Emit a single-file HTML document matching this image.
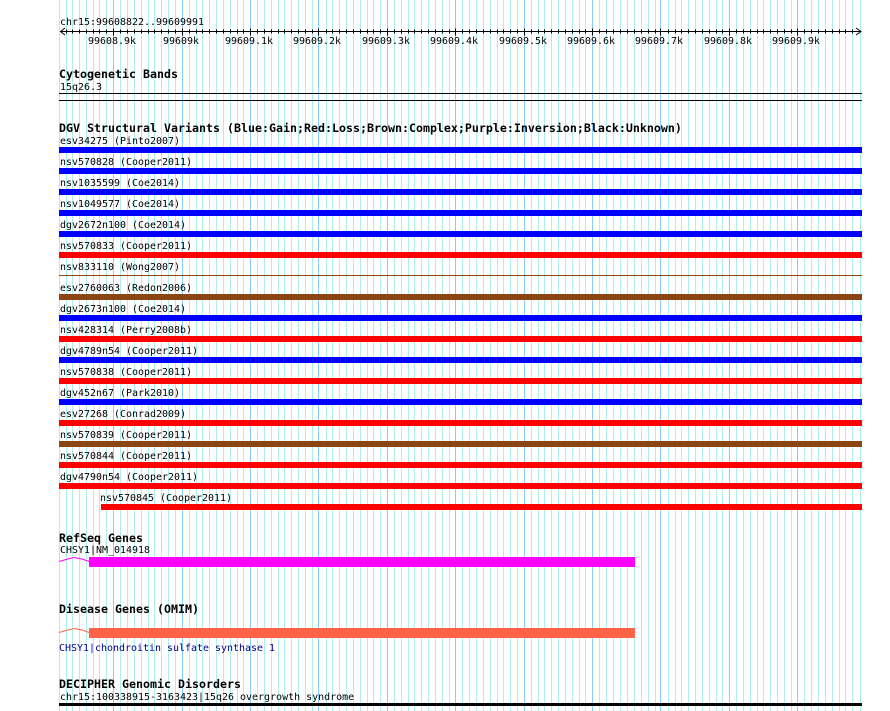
<!DOCTYPE html>
<html><head><meta charset="utf-8"><title>chr15:99608822..99609991</title>
<style>
html,body{margin:0;padding:0;background:#fff;width:890px;height:711px;overflow:hidden}
svg{display:block}
text{font-family:"DejaVu Sans Mono","Liberation Mono",monospace;font-size:9.97px;fill:#000;white-space:pre}
text.b{font-weight:bold;font-size:11.63px}
.bar{shape-rendering:crispEdges}
</style></head><body>
<svg width="890" height="711" viewBox="0 0 890 711" xmlns="http://www.w3.org/2000/svg">
<g shape-rendering="crispEdges" stroke-width="1" fill="none">
<path stroke="#afeeee" transform="translate(.5,0)" d="M59 0V711M66 0V711M72 0V711M79 0V711M86 0V711M93 0V711M99 0V711M106 0V711M120 0V711M127 0V711M134 0V711M141 0V711M148 0V711M154 0V711M161 0V711M168 0V711M175 0V711M189 0V711M196 0V711M202 0V711M209 0V711M216 0V711M223 0V711M230 0V711M237 0V711M243 0V711M257 0V711M264 0V711M271 0V711M278 0V711M284 0V711M291 0V711M298 0V711M305 0V711M312 0V711M326 0V711M332 0V711M339 0V711M346 0V711M353 0V711M360 0V711M367 0V711M373 0V711M380 0V711M394 0V711M401 0V711M408 0V711M414 0V711M421 0V711M428 0V711M435 0V711M442 0V711M449 0V711M462 0V711M469 0V711M476 0V711M483 0V711M490 0V711M497 0V711M503 0V711M510 0V711M517 0V711M531 0V711M538 0V711M544 0V711M551 0V711M558 0V711M565 0V711M572 0V711M579 0V711M585 0V711M599 0V711M606 0V711M613 0V711M620 0V711M627 0V711M634 0V711M641 0V711M648 0V711M655 0V711M668 0V711M675 0V711M681 0V711M688 0V711M695 0V711M702 0V711M709 0V711M716 0V711M722 0V711M736 0V711M743 0V711M750 0V711M757 0V711M763 0V711M770 0V711M777 0V711M784 0V711M791 0V711M804 0V711M811 0V711M818 0V711M825 0V711M832 0V711M839 0V711M845 0V711M852 0V711M860 0V711"/>
<path stroke="#87cefa" transform="translate(.5,0)" d="M113 0V711M182 0V711M250 0V711M318 0V711M387 0V711M455 0V711M524 0V711M592 0V711M660 0V711M729 0V711M797 0V711"/>
<path stroke="#000" transform="translate(.5,.5)" d="M60 31H861M66 29V33M72 29V33M79 29V33M86 29V33M93 29V33M99 29V33M106 29V33M120 29V33M127 29V33M134 29V33M141 29V33M148 29V33M154 29V33M161 29V33M168 29V33M175 29V33M189 29V33M196 29V33M202 29V33M209 29V33M216 29V33M223 29V33M230 29V33M237 29V33M243 29V33M257 29V33M264 29V33M271 29V33M278 29V33M284 29V33M291 29V33M298 29V33M305 29V33M312 29V33M326 29V33M332 29V33M339 29V33M346 29V33M353 29V33M360 29V33M367 29V33M373 29V33M380 29V33M394 29V33M401 29V33M408 29V33M414 29V33M421 29V33M428 29V33M435 29V33M442 29V33M449 29V33M462 29V33M469 29V33M476 29V33M483 29V33M490 29V33M497 29V33M503 29V33M510 29V33M517 29V33M531 29V33M538 29V33M544 29V33M551 29V33M558 29V33M565 29V33M572 29V33M579 29V33M585 29V33M599 29V33M606 29V33M613 29V33M620 29V33M627 29V33M634 29V33M641 29V33M648 29V33M655 29V33M668 29V33M675 29V33M681 29V33M688 29V33M695 29V33M702 29V33M709 29V33M716 29V33M722 29V33M736 29V33M743 29V33M750 29V33M757 29V33M763 29V33M770 29V33M777 29V33M784 29V33M791 29V33M804 29V33M811 29V33M818 29V33M825 29V33M832 29V33M839 29V33M845 29V33M852 29V33M113 28V35M182 28V35M250 28V35M318 28V35M387 28V35M455 28V35M524 28V35M592 28V35M660 28V35M729 28V35M797 28V35"/>
</g>
<path d="M65 28L60.5 31.5L65 35M856 28L861 31.5L856 35" fill="none" stroke="#000" stroke-width="1"/>
<text x="60" y="25">chr15:99608822..99609991</text>
<text x="88" y="44">99608.9k</text>
<text x="163" y="44">99609k</text>
<text x="225" y="44">99609.1k</text>
<text x="293" y="44">99609.2k</text>
<text x="362" y="44">99609.3k</text>
<text x="430" y="44">99609.4k</text>
<text x="499" y="44">99609.5k</text>
<text x="567" y="44">99609.6k</text>
<text x="635" y="44">99609.7k</text>
<text x="704" y="44">99609.8k</text>
<text x="772" y="44">99609.9k</text>

<text class="b" x="59" y="78">Cytogenetic Bands</text>
<text x="60" y="90">15q26.3</text>
<g class="bar">
<rect x="59" y="93" width="803" height="1" fill="#000"/>
<rect x="59" y="100" width="803" height="1" fill="#000"/>
</g>

<text class="b" x="59" y="132">DGV Structural Variants (Blue:Gain;Red:Loss;Brown:Complex;Purple:Inversion;Black:Unknown)</text>

<text x="60" y="144">esv34275 (Pinto2007)</text>
<text x="60" y="165">nsv570828 (Cooper2011)</text>
<text x="60" y="186">nsv1035599 (Coe2014)</text>
<text x="60" y="207">nsv1049577 (Coe2014)</text>
<text x="60" y="228">dgv2672n100 (Coe2014)</text>
<text x="60" y="249">nsv570833 (Cooper2011)</text>
<text x="60" y="270">nsv833110 (Wong2007)</text>
<text x="60" y="291">esv2760063 (Redon2006)</text>
<text x="60" y="312">dgv2673n100 (Coe2014)</text>
<text x="60" y="333">nsv428314 (Perry2008b)</text>
<text x="60" y="354">dgv4789n54 (Cooper2011)</text>
<text x="60" y="375">nsv570838 (Cooper2011)</text>
<text x="60" y="396">dgv452n67 (Park2010)</text>
<text x="60" y="417">esv27268 (Conrad2009)</text>
<text x="60" y="438">nsv570839 (Cooper2011)</text>
<text x="60" y="459">nsv570844 (Cooper2011)</text>
<text x="60" y="480">dgv4790n54 (Cooper2011)</text>
<text x="100" y="501">nsv570845 (Cooper2011)</text>

<g class="bar">
<rect x="59" y="147" width="803" height="6" fill="#0000ff"/>
<rect x="59" y="168" width="803" height="6" fill="#0000ff"/>
<rect x="59" y="189" width="803" height="6" fill="#0000ff"/>
<rect x="59" y="210" width="803" height="6" fill="#0000ff"/>
<rect x="59" y="231" width="803" height="6" fill="#0000ff"/>
<rect x="59" y="252" width="803" height="6" fill="#ff0000"/>
<rect x="59" y="275" width="803" height="1" fill="#8b4513"/>
<rect x="59" y="294" width="803" height="6" fill="#8b4513"/>
<rect x="59" y="315" width="803" height="6" fill="#0000ff"/>
<rect x="59" y="336" width="803" height="6" fill="#ff0000"/>
<rect x="59" y="357" width="803" height="6" fill="#0000ff"/>
<rect x="59" y="378" width="803" height="6" fill="#ff0000"/>
<rect x="59" y="399" width="803" height="6" fill="#0000ff"/>
<rect x="59" y="420" width="803" height="6" fill="#ff0000"/>
<rect x="59" y="441" width="803" height="6" fill="#8b4513"/>
<rect x="59" y="462" width="803" height="6" fill="#ff0000"/>
<rect x="59" y="483" width="803" height="6" fill="#ff0000"/>
<rect x="101" y="504" width="761" height="6" fill="#ff0000"/>
</g>

<text class="b" x="59" y="542">RefSeq Genes</text>
<text x="60" y="553">CHSY1|NM_014918</text>
<path d="M59 561.5L68 559L74 557.5L82 559L89 561.5" fill="none" stroke="#ff00ff" stroke-width="1"/>
<rect class="bar" x="89" y="557" width="546" height="10" fill="#ff00ff"/>

<text class="b" x="59" y="613">Disease Genes (OMIM)</text>
<path d="M59 632.5L68 630L74 628.5L82 630L89 632.5" fill="none" stroke="#ff6347" stroke-width="1"/>
<rect class="bar" x="89" y="628" width="546" height="10" fill="#ff6347"/>
<text x="59" y="651" style="fill:#00008b">CHSY1|chondroitin sulfate synthase 1</text>

<text class="b" x="59" y="688">DECIPHER Genomic Disorders</text>
<text x="60" y="700">chr15:100338915-3163423|15q26 overgrowth syndrome</text>
<rect class="bar" x="59" y="703" width="803" height="3" fill="#000"/>
</svg>
</body></html>
